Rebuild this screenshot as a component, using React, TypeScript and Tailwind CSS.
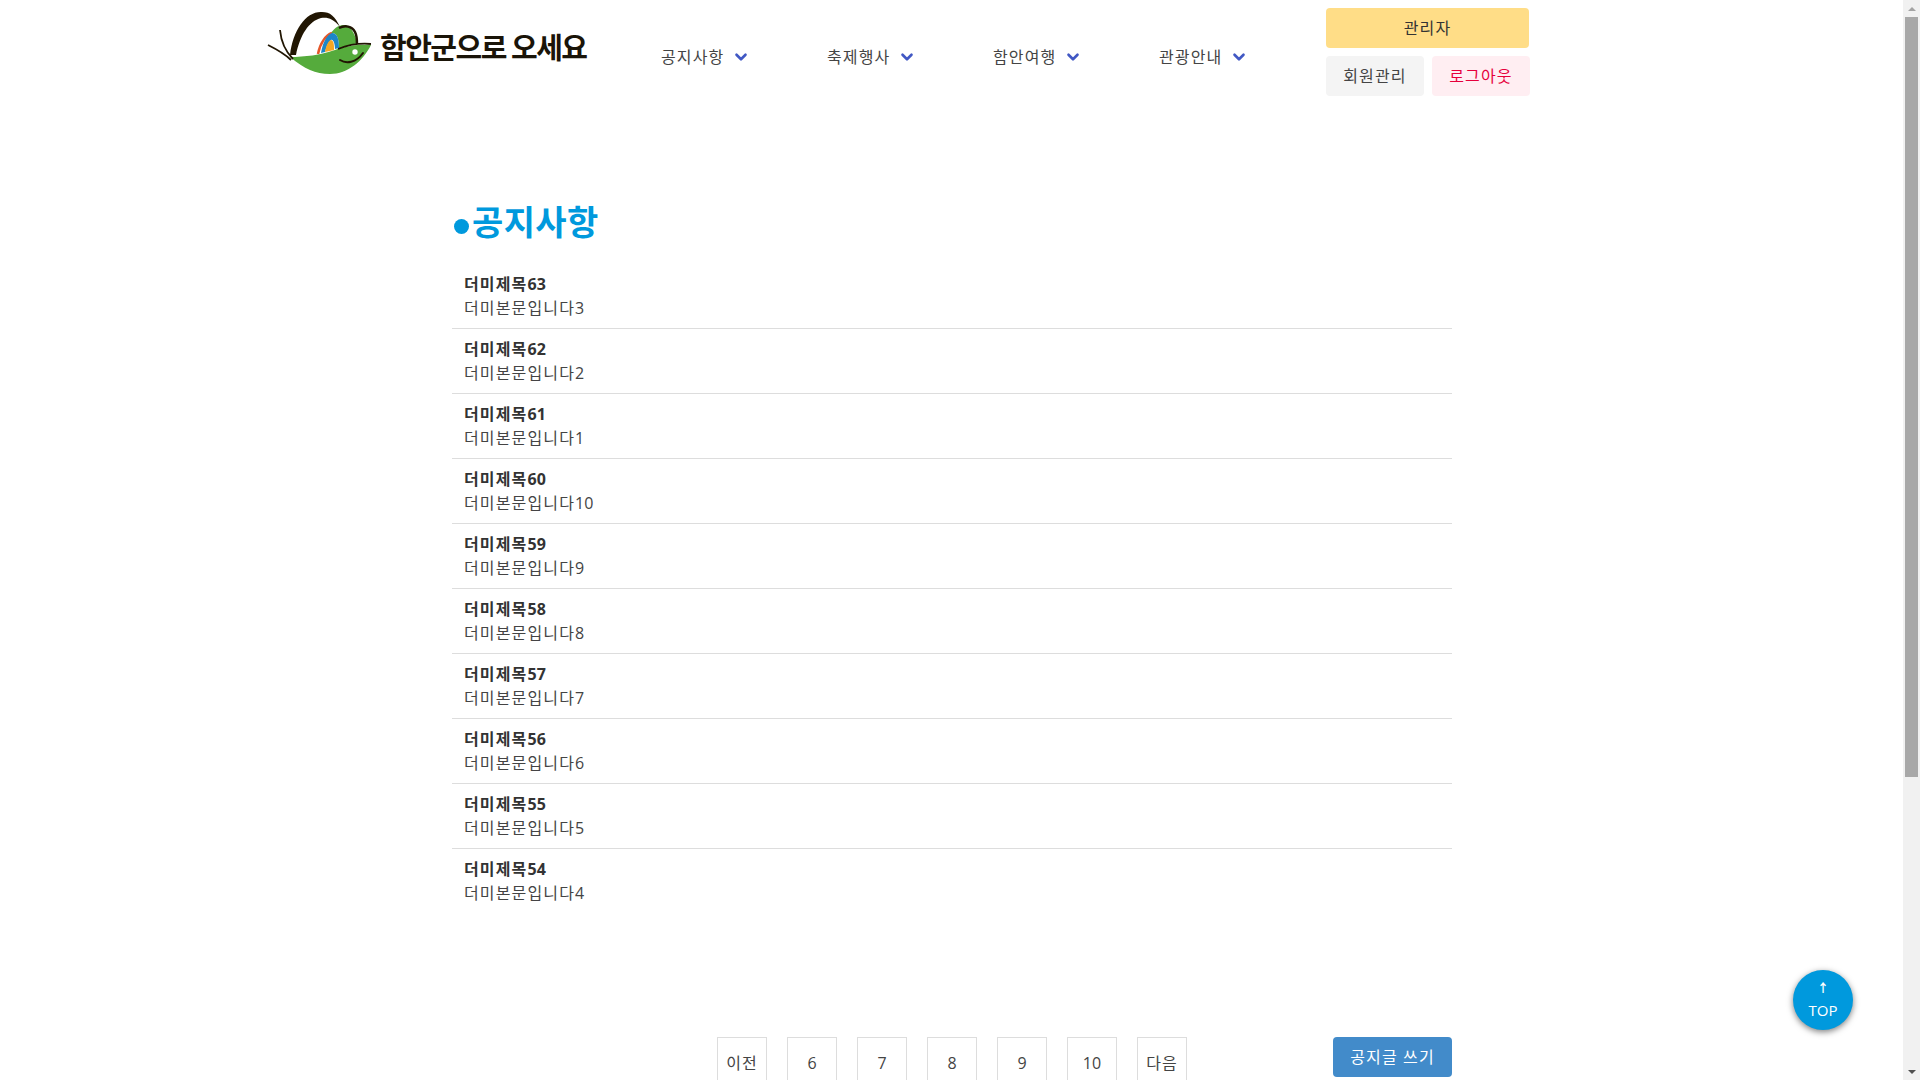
import type { ReactNode } from 'react';
import { ChevronDown } from 'lucide-react';

const navItems = ['공지사항', '축제행사', '함안여행', '관광안내'];

const notices = [
  { no: 63, body: 3 },
  { no: 62, body: 2 },
  { no: 61, body: 1 },
  { no: 60, body: 10 },
  { no: 59, body: 9 },
  { no: 58, body: 8 },
  { no: 57, body: 7 },
  { no: 56, body: 6 },
  { no: 55, body: 5 },
  { no: 54, body: 4 },
];

const pages = ['이전', '6', '7', '8', '9', '10', '다음'];

// hangul in the shot sits on a full-em advance, Noto is a bit narrower
function Ko({ children }: { children: ReactNode }) {
  return <span className="tracking-[1.15px]">{children}</span>;
}

function LogoMark() {
  return (
    <svg viewBox="0 0 120 75" className="h-[75px] w-[120px] shrink-0">
      <path d="M70 30 C73 24 78 20 84 20 C90 20 95 28 97 38 L79 44 C79 36 78 29 73 28 Z" fill="#55ab3c" />
      <path d="M58 49 C60 38 66 30 72 28" fill="none" stroke="#e4572a" strokeWidth="2.5" />
      <path d="M61 48 C63 36 68 28 73 28 C78 29 79 36 79 43 L75 44 C75 38 73 34 71 35 C68 37 66 43 65 47 Z" fill="#1c86c8" />
      <path d="M65 47 C66 40 69 35 71 35 C74 36 74 40 74 45 Z" fill="#f5a623" />
      <path d="M30 50 C33 25 46 6 62 7 C70 7 75 11 80 22 C73 13 67 12 61 13 C49 16 40 30 36 50 Z" fill="#211603" />
      <path d="M79 23 C85 20 92 21 95 27 C97 31 97 35 97 39" fill="none" stroke="#211603" strokeWidth="2.5" />
      <path d="M30 52 C45 64 55 69 70 69 C88 69 103 56 111 40 C100 39 85 41 75 45 C60 50 45 52 30 52 Z" fill="#55ab3c" />
      <path d="M78 44 C88 40 100 38 111 39" fill="none" stroke="#211603" strokeWidth="1.8" />
      <path d="M8 40 C16 44 24 48 31 55" fill="none" stroke="#211603" strokeWidth="1.8" />
      <path d="M20 25 C21 36 25 46 33 54" fill="none" stroke="#211603" strokeWidth="1.8" />
      <path d="M80 55 C86 59 96 58 103 48" fill="none" stroke="#211603" strokeWidth="2" strokeLinecap="round" />
      <circle cx="95" cy="47" r="2.7" fill="#ffffff" />
    </svg>
  );
}

export default function App() {
  return (
    <div className="relative flex h-screen w-full overflow-hidden bg-white text-[#333333] font-['Open_Sans','Noto_Sans_CJK_KR',sans-serif]">
      <div className="w-[1903px] shrink-0">
        {/* Header */}
        <header className="flex h-[104px] pl-[260px]">
          <div className="flex h-[85px] w-[360px] items-center">
            <LogoMark />
            <span className="mt-[8px] whitespace-nowrap text-[29px] leading-none font-bold tracking-[-1.5px] text-[#1a1408] font-['Noto_Sans_CJK_KR',sans-serif]">함안군으로 오세요</span>
          </div>
          <nav className="ml-[41px] flex h-[113px] w-[665px] items-center">
            {navItems.map((item) => (
              <div key={item} className="flex w-[166px] items-center text-base text-[#444444]">
                <Ko>{item}</Ko>
                <ChevronDown className="ml-[8px] mt-[1px] h-[18px] w-[18px] text-[#4158c4]" strokeWidth={3.5} />
              </div>
            ))}
          </nav>
          <div className="flex w-[204px] flex-col gap-2 pt-2 text-base">
            <button className="h-10 w-[203px] rounded-[4px] bg-[#ffdd87] text-[#333333]"><Ko>관리자</Ko></button>
            <div className="flex gap-2">
              <button className="h-10 w-[98px] rounded-[4px] bg-[#f4f4f4] text-[#444444]"><Ko>회원관리</Ko></button>
              <button className="h-10 w-[98px] rounded-[4px] bg-[#ffeef2] text-[#e6003c]"><Ko>로그아웃</Ko></button>
            </div>
          </div>
        </header>

        {/* Notice list */}
        <main className="ml-[452px] w-[1000px] pt-[92px]">
          <h1 className="flex h-[68px] items-center pb-[16px] pl-[2px] text-[34px] font-bold tracking-[0.4px] text-[#0099dd]">
            <span className="mr-[3px] mt-[8px] h-[15px] w-[15px] rounded-full bg-[#0099dd]" />
            공지사항
          </h1>
          <ul>
            {notices.map((notice, i) => (
              <li key={notice.no} className={i < notices.length - 1 ? 'border-b border-[#dddddd] px-3 py-2' : 'px-3 py-2'}>
                <p className="text-base leading-6 font-bold text-[#333333]"><Ko>더미제목</Ko>{notice.no}</p>
                <p className="text-base leading-6 text-[#444444]"><Ko>더미본문입니다</Ko>{notice.body}</p>
              </li>
            ))}
          </ul>
          <div className="mt-[124px] flex items-start">
            <div className="ml-[265px] flex gap-5">
              {pages.map((page) => (
                <div key={page} className="h-[60px] w-[50px] border border-[#dddddd] pt-[13px] text-center text-base text-[#444444]">
                  {/\d/.test(page) ? page : <Ko>{page}</Ko>}
                </div>
              ))}
            </div>
            <button className="ml-auto h-10 w-[119px] rounded-[4px] bg-[#428bca] text-base text-white"><Ko>공지글 쓰기</Ko></button>
          </div>
        </main>
      </div>

      {/* Scrollbar */}
      <div className="flex w-[17px] shrink-0 flex-col items-center bg-[#f1f1f1]">
        <div className="flex h-[17px] items-center">
          <div className="h-0 w-0 border-x-[4px] border-b-[4px] border-x-transparent border-b-[#a3a3a3]" />
        </div>
        <div className="h-[760px] w-[13px] bg-[#a8a8a8]" />
        <div className="flex-1" />
        <div className="flex h-[17px] items-center">
          <div className="h-0 w-0 border-x-[4px] border-t-[4px] border-x-transparent border-t-[#505050]" />
        </div>
      </div>

      {/* Top button */}
      <button className="absolute left-[1793px] top-[970px] flex h-[60px] w-[60px] flex-col items-center justify-center rounded-full bg-[#0099dd] pb-[2px] text-[15px] leading-5 text-white shadow-[0_2px_6px_rgba(0,0,0,0.5)]">
        <span className="text-xs leading-[22px] font-bold">↑</span>
        <span>TOP</span>
      </button>
    </div>
  );
}
